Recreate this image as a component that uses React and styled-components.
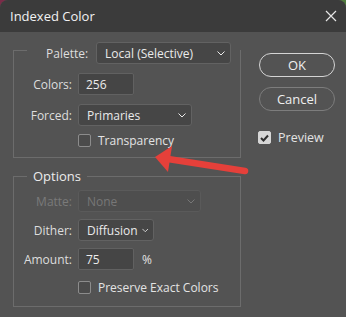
import * as React from 'react';
import styled, { createGlobalStyle } from 'styled-components';

const GlobalStyle = createGlobalStyle`
    html, body {
        margin: 0;
        padding: 0;
        background: linear-gradient(90deg, #7a2c48 0%, #6a4a50 50%, #4f7a3c 100%);
    }
    * {
        box-sizing: border-box;
    }
`;

const Window = styled.div`
    position: relative;
    width: 346px;
    height: 317px;
    background-color: #535353;
    border-radius: 8px 8px 0 0;
    overflow: hidden;
    font-family: "Open Sans", "Noto Sans", sans-serif;
    font-size: 12px;
    color: #e3e3e3;
`;

const TitleBar = styled.div`
    display: flex;
    align-items: center;
    justify-content: space-between;
    height: 32px;
    padding: 0 10px 0 10px;
    background-color: #3b3b3b;
    color: #f2f2f2;
    font-size: 13px;
`;

const CloseButton = styled.div`
    display: flex;
    width: 12px;
    height: 12px;
    margin-right: -1px;
`;

const Body = styled.div`
    display: flex;
    gap: 17px;
    padding: 4px 10px 0 13px;
`;

const LeftColumn = styled.div`
    display: flex;
    flex-direction: column;
    gap: 9px;
    width: 228px;
`;

const Group = styled.fieldset`
    margin: 0;
    min-width: 0;
    border: 1px solid #6c6c6c;
    padding: ${({ $top }) => $top}px 0 ${({ $bottom }) => $bottom}px 0;
`;

const Legend = styled.legend`
    display: flex;
    align-items: center;
    gap: 8px;
    margin-left: 13px;
    padding: ${({ $wide }) => ($wide ? '6px 9px 0 19px' : '0 6px')};
    font-size: ${({ $wide }) => ($wide ? '12px' : '13px')};
    color: #ececec;
`;

const Rows = styled.div`
    display: grid;
    grid-template-columns: 58px 1fr;
    column-gap: 6px;
    row-gap: ${({ $gap }) => $gap}px;
    align-items: center;
`;

const Label = styled.label`
    text-align: right;
    color: ${({ $disabled }) => ($disabled ? '#7a7a7a' : '#dedede')};
    white-space: nowrap;
`;

const Select = styled.div`
    display: flex;
    align-items: center;
    justify-content: space-between;
    gap: 4px;
    width: ${({ $width }) => $width}px;
    height: 22px;
    padding: 0 5px 0 8px;
    background-color: ${({ $disabled }) => ($disabled ? '#4e4e4e' : '#464646')};
    border: 1px solid ${({ $disabled }) => ($disabled ? '#5a5a5a' : '#626262')};
    border-radius: 3px;
    color: ${({ $disabled }) => ($disabled ? '#777777' : '#eaeaea')};
    white-space: nowrap;
`;

const Input = styled.div`
    display: flex;
    align-items: center;
    width: 56px;
    height: 22px;
    padding-left: 7px;
    background-color: #454545;
    border: 1px solid #616161;
    border-radius: 2px;
    color: #ececec;
`;

const InputRow = styled.div`
    display: flex;
    align-items: center;
    gap: 8px;
`;

const CheckRow = styled.div`
    grid-column: 2;
    display: flex;
    align-items: center;
    gap: 7px;
    height: 14px;
    margin-top: ${({ $offset }) => $offset}px;
`;

const Box = styled.span`
    display: flex;
    align-items: center;
    justify-content: center;
    width: 13px;
    height: 13px;
    border: 1px solid ${({ $checked }) => ($checked ? '#d6d6d6' : '#8c8c8c')};
    border-radius: 2px;
    background-color: ${({ $checked }) => ($checked ? '#d6d6d6' : '#4b4b4b')};
`;

const RightColumn = styled.div`
    display: flex;
    flex-direction: column;
    gap: 10px;
    width: 78px;
    padding-top: 17px;
`;

const Button = styled.div`
    display: flex;
    align-items: center;
    justify-content: center;
    width: 76px;
    height: 24px;
    margin-left: 1px;
    border: ${({ $primary }) => ($primary ? '1.5px solid #d4d4d4' : '1px solid #7d7d7d')};
    border-radius: 12px;
    color: #efefef;
    font-size: 13px;
`;

const PreviewRow = styled.div`
    display: flex;
    align-items: center;
    gap: 7px;
    margin-top: 8px;
    font-size: 12.5px;
`;

const Arrow = styled.svg`
    position: absolute;
    left: 150px;
    top: 140px;
`;

const Chevron = () => <svg width="8" height="5" viewBox="0 0 8 5">
    <path d="M0.5 0.5 L4 4 L7.5 0.5" fill="none" stroke="currentColor" strokeWidth="1"/>
</svg>;

const CheckBox = ({ checked }) => <Box $checked={checked}>
    {checked && <svg width="9" height="8" viewBox="0 0 9 8">
        <path d="M1 4 L3.5 6.5 L8 1.5" fill="none" stroke="#2e2e2e" strokeWidth="2"/>
    </svg>}
</Box>;

const App = () => {
    return <Window>
        <GlobalStyle/>
        <TitleBar>
            <span>Indexed Color</span>
            <CloseButton>
                <svg width="12" height="12" viewBox="0 0 12 12">
                    <path d="M1 1 L11 11 M11 1 L1 11" stroke="#e6e6e6" strokeWidth="1.2"/>
                </svg>
            </CloseButton>
        </TitleBar>
        <Body>
            <LeftColumn>
                <Group $top={9} $bottom={10}>
                    <Legend $wide>
                        <Label>Palette:</Label>
                        <Select $width={135}>Local (Selective)<Chevron/></Select>
                    </Legend>
                    <Rows $gap={9}>
                        <Label>Colors:</Label>
                        <Input>256</Input>
                        <Label>Forced:</Label>
                        <Select $width={114}>Primaries<Chevron/></Select>
                        <CheckRow $offset={-2}>
                            <CheckBox/>
                            <span>Transparency</span>
                        </CheckRow>
                    </Rows>
                </Group>
                <Group $top={5} $bottom={12}>
                    <Legend>Options</Legend>
                    <Rows $gap={7}>
                        <Label $disabled>Matte:</Label>
                        <Select $width={123} $disabled>None<Chevron/></Select>
                        <Label>Dither:</Label>
                        <Select $width={76}>Diffusion<Chevron/></Select>
                        <Label>Amount:</Label>
                        <InputRow>
                            <Input>75</Input>
                            <span>%</span>
                        </InputRow>
                        <CheckRow $offset={3}>
                            <CheckBox/>
                            <span>Preserve Exact Colors</span>
                        </CheckRow>
                    </Rows>
                </Group>
            </LeftColumn>
            <RightColumn>
                <Button $primary>OK</Button>
                <Button>Cancel</Button>
                <PreviewRow>
                    <CheckBox checked/>
                    <span>Preview</span>
                </PreviewRow>
            </RightColumn>
        </Body>
        <Arrow width="100" height="40" viewBox="0 0 100 40">
            <path d="M95 31 L18 19" stroke="#e5403a" strokeWidth="6.5" strokeLinecap="round"/>
            <path d="M5 17 L22 6 L18 32 Z" fill="#e5403a"/>
        </Arrow>
    </Window>;
};

export default App;
